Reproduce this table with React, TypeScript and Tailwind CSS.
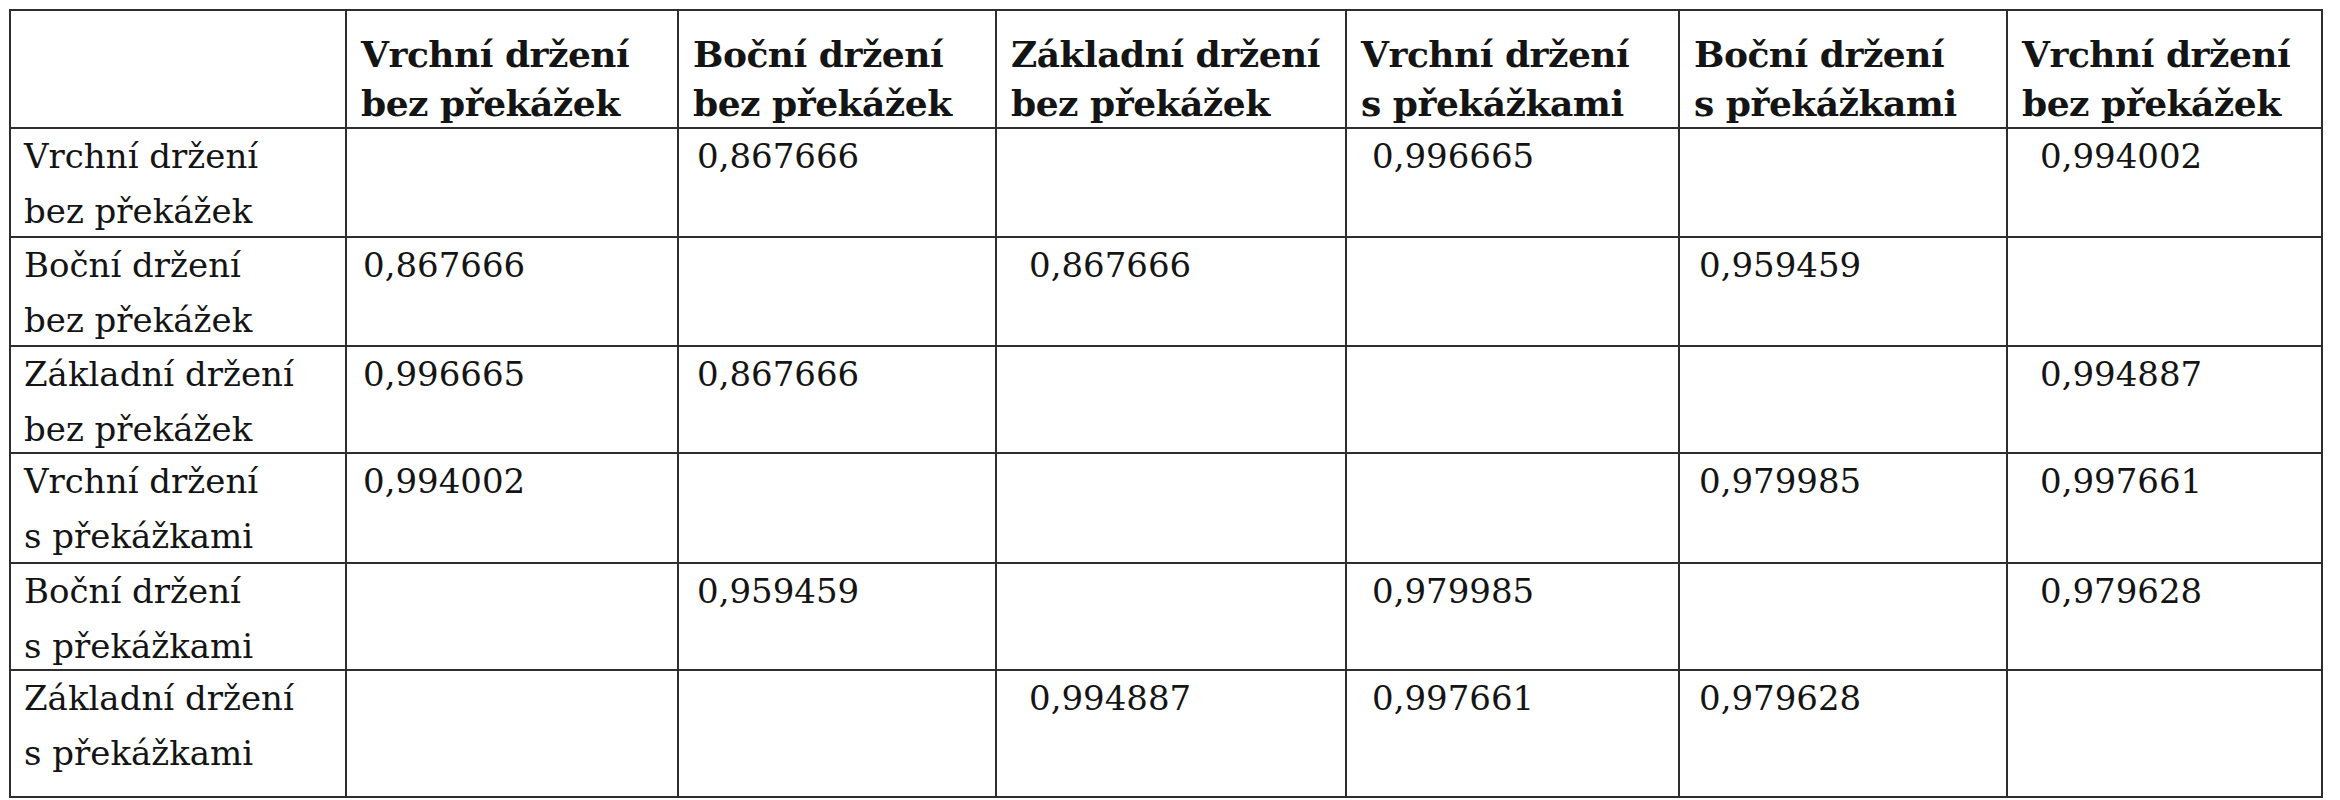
const headers = [
  ["Vrchní držení", "bez překážek"],
  ["Boční držení", "bez překážek"],
  ["Základní držení", "bez překážek"],
  ["Vrchní držení", "s překážkami"],
  ["Boční držení", "s překážkami"],
  ["Vrchní držení", "bez překážek"],
];

const rows = [
  { label: ["Vrchní držení", "bez překážek"], values: ["", "0,867666", "", "0,996665", "", "0,994002"], h: "h-[109px]" },
  { label: ["Boční držení", "bez překážek"], values: ["0,867666", "", "0,867666", "", "0,959459", ""], h: "h-[109px]" },
  { label: ["Základní držení", "bez překážek"], values: ["0,996665", "0,867666", "", "", "", "0,994887"], h: "h-[107px]" },
  { label: ["Vrchní držení", "s překážkami"], values: ["0,994002", "", "", "", "0,979985", "0,997661"], h: "h-[110px]" },
  { label: ["Boční držení", "s překážkami"], values: ["", "0,959459", "", "0,979985", "", "0,979628"], h: "h-[107px]" },
  { label: ["Základní držení", "s překážkami"], values: ["", "", "0,994887", "0,997661", "0,979628", ""], h: "h-[127px]" },
];

// left padding of the numbers differs a bit per column in the original
const valuePad = ["pl-[16px]", "pl-[18px]", "pl-[32px]", "pl-[25px]", "pl-[19px]", "pl-[32px]"];

const Cell = ({ className, children }: { className?: string; children?: React.ReactNode }) => (
  <div className={"border-r-2 border-b-2 border-[#2e2e2e] overflow-visible whitespace-nowrap " + (className ?? "")}>
    {children}
  </div>
);

export default function App() {
  return (
    <div className="min-h-[800px] bg-white pt-[9px] pl-[9px] font-['DejaVu_Serif','Liberation_Serif',serif] text-[#141414]">
      <div className="grid w-[2314px] grid-cols-[336px_332px_318px_350px_333px_328px_315px] border-t-2 border-l-2 border-[#2e2e2e]">
        <Cell className="h-[118px]" />
        {headers.map((hd, i) => (
          <Cell key={i} className="h-[118px] pl-[14px] pt-[19px] text-[36px] leading-[49px] font-bold tracking-[-0.5px]">
            {hd[0]}
            <br />
            {hd[1]}
          </Cell>
        ))}
        {rows.map((r, ri) => (
          <div key={ri} className="contents">
            <Cell className={r.h + " pl-[13px] text-[34px] leading-[55px]"}>
              {r.label[0]}
              <br />
              {r.label[1]}
            </Cell>
            {r.values.map((v, ci) => (
              <Cell key={ci} className={r.h + " " + valuePad[ci] + " text-[34px] leading-[55px]"}>
                {v}
              </Cell>
            ))}
          </div>
        ))}
      </div>
    </div>
  );
}
